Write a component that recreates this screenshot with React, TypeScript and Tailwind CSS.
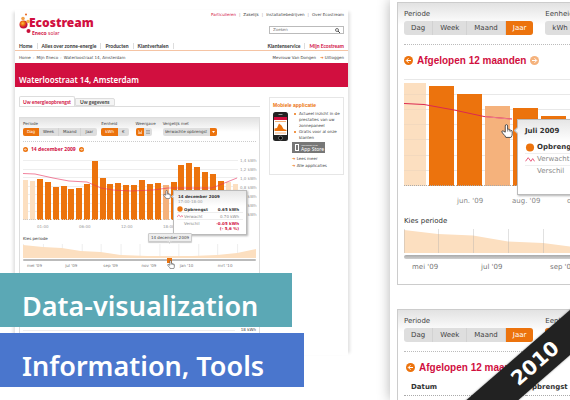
import React from "react";

const noto = "font-['Noto_Sans',sans-serif]";
const dejavu = "font-['DejaVu_Sans',sans-serif]";
const arial = "font-['Liberation_Sans',Arial,sans-serif]";

function Hand({ className }: { className: string }) {
  return (
    <svg viewBox="0 0 20 24" className={className} aria-hidden="true">
      <path
        d="M7 14V3.500Q7 1 9 1T11 3.500V9Q13.500 8 14 10Q16 9 16.500 11.200Q19 10.500 19 13V17Q19 20 17 23H8Q7 20 3.500 17L1 13.500Q1 11 3.500 12Z"
        fill="#fff"
        stroke="#444"
        strokeWidth="1.6"
        strokeLinejoin="round"
      />
      <path d="M11 9v4M14 10v3M16.500 11.500v2.500" stroke="#444" strokeWidth="1" />
    </svg>
  );
}

function CircleArrow({ back, pale, className }: { back?: boolean; pale?: boolean; className: string }) {
  return (
    <svg viewBox="0 0 18 18" className={className} aria-hidden="true">
      <circle cx="9" cy="9" r="9" fill={pale ? "#f5b27c" : "#ec730d"} />
      <path
        d={back ? "M14 9H5M9 4.500L4.500 9L9 13.500" : "M4 9H13M9 4.500L13.500 9L9 13.500"}
        fill="none"
        stroke="#fff"
        strokeWidth="2"
      />
    </svg>
  );
}

function Logo() {
  return (
    <div className={`flex ${noto} text-[#d10f3f]`}>
      <svg viewBox="0 0 12 22" className="h-[22px] w-3 shrink-0" aria-hidden="true">
        <defs>
          <radialGradient id="orb" cx="40%" cy="35%">
            <stop offset="0" stopColor="#fbc04d" />
            <stop offset="0.500" stopColor="#ec730d" />
            <stop offset="1" stopColor="#c8103a" />
          </radialGradient>
        </defs>
        <circle cx="7" cy="2.500" r="1" fill="#e9641c" />
        <circle cx="4" cy="6.500" r="1.800" fill="#f2a04a" />
        <circle cx="4.500" cy="12.500" r="4" fill="url(#orb)" />
        <circle cx="9" cy="9.500" r="1.800" fill="#f6b24a" />
        <circle cx="9.500" cy="19" r="2" fill="#c8103a" />
      </svg>
      <div className="-ml-0.5 pt-[3px]">
        <div className="text-[12px] font-black leading-[15px]">Ecostream</div>
        <div className="pl-[3px] text-[5px] leading-[6px]">
          <b>Eneco</b> solar
        </div>
      </div>
    </div>
  );
}

function Segments({ items, active, small }: { items: string[]; active: string | null; small?: boolean }) {
  return (
    <div className={small ? "flex h-2 overflow-hidden rounded-[2px] bg-[#dedede]" : "flex h-3.5 overflow-hidden rounded-[3px] bg-[#dedede]"}>
      {items.map((item) => (
        <button
          key={item}
          type="button"
          aria-pressed={item === active}
          className={`${small ? "px-1 text-[4px] leading-[8px]" : "px-[7px] text-[7px] leading-[14px]"} ${
            item === active ? "bg-[#ec730d] text-white" : "border-r border-[#d2d2d2] text-[#444] last:border-r-0"
          }`}
        >
          {item}
        </button>
      ))}
    </div>
  );
}

function Tooltip({ small, title, time, values }: { small?: boolean; title: string; time?: string; values: string[] }) {
  const row = small ? "flex h-[7px] items-center border-b border-[#eee]" : "flex h-3 items-center border-b border-[#eee]";
  const icon = small ? "mr-px h-1.5 w-1.5 shrink-0" : "mr-0.5 h-[9px] w-[10px] shrink-0";
  return (
    <div
      className={`relative border border-[#bbb] bg-white shadow-[1px_1px_2px_rgba(0,0,0,0.3)] ${dejavu} ${
        small ? "h-[45px] w-[74px] text-[4px] leading-[5px]" : "h-[76px] w-[140px] text-[7px] leading-[9px]"
      }`}
    >
      <span
        className={`absolute rotate-45 border-b border-l border-[#bbb] bg-[#f4f4f4] ${
          small ? "-left-[2px] top-1 h-[3px] w-[3px]" : "-left-[3px] top-2 h-[5px] w-[5px]"
        }`}
      />
      <div className={`bg-linear-to-b from-[#e6e6e6] to-white text-[#333] ${small ? "h-[15px] px-1 pt-[3px]" : "h-[22px] px-[7px] pt-[7px]"}`}>
        <b>{title}</b>
        {time && <div className="text-[#999]">{time}</div>}
      </div>
      <div className={small ? "px-[3px]" : "px-[7px]"}>
        <div className={`${row} text-[#333]`}>
          <svg viewBox="0 0 10 10" className={icon} aria-hidden="true">
            <circle cx="5" cy="5" r="4.500" fill="#ec730d" />
          </svg>
          <b>Opbrengst</b>
          <b className="ml-auto pr-1">{values[0]}</b>
        </div>
        <div className={`${row} text-[#888]`}>
          <svg viewBox="0 0 10 10" className={icon} aria-hidden="true">
            <path d="M0 7L3 3L6 7L8 4L10 7" fill="none" stroke="#e54a6e" />
          </svg>
          <span>Verwacht</span>
          <span className="ml-auto pr-1">{values[1]}</span>
        </div>
        <div className="flex pt-px text-[#888]">
          <span className={icon} />
          <span>Verschil</span>
          <b className="ml-auto pr-1 text-right text-[#d10f3f]">
            {values[2]}
            <br />
            {values[3]}
          </b>
        </div>
      </div>
    </div>
  );
}

const dayBars: [number, number, string][] = [
  [0, 40, "l"], [7, 39, "l"], [14, 41, "d"], [22, 38, "d"], [30, 33, "d"], [38, 34, "d"], [45, 31, "d"], [53, 32, "d"],
  [61, 36, "d"], [69, 59, "d"], [77, 42, "d"], [84, 36, "d"], [92, 37, "d"], [100, 35, "d"], [108, 35, "d"], [116, 40, "d"],
  [124, 36, "d"], [132, 37, "d"], [140, 35, "m"], [148, 38, "d"], [155, 55, "d"], [163, 57, "d"], [171, 53, "d"],
  [179, 48, "d"], [187, 46, "d"], [195, 39, "d"], [203, 38, "l"], [210, 36, "l"],
];
const yearBars: [number, number, string][] = [
  [0, 103, "l"], [25, 100, "d"], [53, 92, "d"], [81, 80, "m"], [109, 78, "d"], [137, 70, "d"], [165, 64, "d"],
];
const fills: Record<string, string> = { l: "#fcdfc0", m: "#f5b27c", d: "#ec730d" };

function DayChart() {
  return (
    <div className="relative flex text-[4px] leading-[6px] text-[#999]">
      <div>
        <svg viewBox="0 0 215 64" className="h-16 w-[215px]" role="img" aria-label="Opbrengst per uur">
          {[4, 13, 21, 30, 38, 47, 55].map((y) => (
            <path key={y} d={`M0 ${y}.5H215`} stroke="#eee" />
          ))}
          {dayBars.map(([x, h, t]) => (
            <rect key={x} x={x} y={64 - h} width={t === "l" ? 5 : 6} height={h} fill={fills[t]} />
          ))}
          <path d="M0 63.500H215" stroke="#ccc" strokeDasharray="1 1" />
          <path d="M0 17.500L12 18L30 22L46 25L64 26L78 32L90 34L108 35L130 34L145 32H189L214 22" fill="none" stroke="#e8305d" strokeOpacity="0.600" />
        </svg>
        <div className="flex h-4 pl-3.5 pt-1">
          {["01:00", "06:00", "12:00", "18:00"].map((t) => (
            <span key={t} className="w-[42px]">{t}</span>
          ))}
        </div>
      </div>
      <div className="flex flex-col gap-[3px] pl-0.5 pt-[2px]">
        {["1,4 kWh", "1,2 kWh", "1,0 kWh", "0,8 kWh", "0,6 kWh", "0,4 kWh", "0,2 kWh"].map((v) => (
          <span key={v} className="whitespace-nowrap">{v}</span>
        ))}
      </div>
      <div className="absolute left-[150px] top-[34px]">
        <Tooltip small title="14 december 2009" time="17:00-18:00" values={["0.65 kWh", "0.70 kWh", "-0.05 kWh", "(- 5,6 %)"]} />
      </div>
      <Hand className="absolute left-[140px] top-[34px] h-[9px] w-2" />
    </div>
  );
}

const links = ["Particulieren", "Zakelijk", "Installatiebedrijven", "Over Ecostream"];
const benefits = ["Actueel inzicht in de prestaties van uw zonnepaneel", "Gratis voor al onze klanten"];

function Website() {
  return (
    <article className={`mb-[45px] ml-[15px] mt-2.5 w-[333px] shrink-0 overflow-hidden bg-white text-[4px] leading-[6px] text-[#444] shadow-[-4px_0_3px_-2px_rgba(0,0,0,0.12),4px_0_3px_-2px_rgba(0,0,0,0.12)] ${dejavu}`}>
      <header>
        <div className="flex h-[31px] justify-between px-1 pt-0.5">
          <Logo />
          <div className="flex flex-col items-end gap-2">
            <nav className="flex">
              {links.map((l, i) => (
                <React.Fragment key={l}>
                  {i > 0 && <span className="px-[3px] text-[#999]">|</span>}
                  <a href="#" className={i === 0 ? "text-[#d10f3f]" : ""}>{l}</a>
                </React.Fragment>
              ))}
            </nav>
            <div className="flex h-2 w-[75px] items-center border border-[#bbb] px-[3px]">
              <input aria-label="Zoeken" placeholder="Zoeken" className="h-1.5 min-w-0 flex-1 placeholder:text-[#777]" />
              <svg viewBox="0 0 10 10" className="h-[5px] w-[5px]" aria-hidden="true">
                <circle cx="4" cy="4" r="3" fill="none" stroke="#444" strokeWidth="1.500" />
                <path d="M6 6L10 10" stroke="#444" strokeWidth="2" />
              </svg>
            </div>
          </div>
        </div>
        <nav className="flex h-2.5 items-center border-b border-[#f5c4a4] px-1 font-['Lato',sans-serif] text-[5px] font-bold text-[#333]">
          <a href="#" className="border-r border-[#ddd] pr-1">Home</a>
          <a href="#" className="border-r border-[#ddd] px-1">Alles over zonne-energie</a>
          <a href="#" className="border-r border-[#ddd] px-1">Producten</a>
          <a href="#" className="border-r border-[#ddd] px-1">Klantverhalen</a>
          <a href="#" className="ml-auto border-r border-[#ddd] pr-1">Klantenservice</a>
          <a href="#" className="pl-1 text-[#d10f3f]">Mijn Ecostream</a>
        </nav>
        <div className="flex h-3 items-center gap-0.5 px-1 pt-0.5">
          <a href="#">Home</a><span className="text-[#bbb]">›</span>
          <a href="#">Mijn Eneco</a><span className="text-[#bbb]">›</span>
          <span>Waterloostraat 14, Amsterdam</span>
          <span className="ml-auto pr-0.5">Mevrouw Van Dongen</span>
          <a href="#"><span className="text-[#ec730d]">➔</span> Uitloggen</a>
        </div>
      </header>
      <div className="h-6 bg-[#d10f3f] px-1 pt-3">
        <h1 className={`text-[8px] font-semibold leading-[10px] text-white ${noto}`}>Waterloostraat 14, Amsterdam</h1>
      </div>
      <div className="flex gap-[9px] px-1 pt-2.5">
        <main className="min-w-0 flex-1">
          <div className="flex h-2.5 items-end border-b border-[#ddd] font-['Lato',sans-serif]">
            <button type="button" className="h-2.5 rounded-t-[2px] border border-b-0 border-[#ddd] bg-white px-[3px] text-[5px] font-bold text-[#d10f3f]">Uw energieopbrengst</button>
            <button type="button" className="h-2 rounded-tr-[2px] border border-[#ddd] bg-[#f4f4f4] px-1 text-[5px] font-bold">Uw gegevens</button>
          </div>
          <section className="mt-2.5 border border-[#ddd] bg-linear-to-b from-[#e2e2e2] to-transparent to-[14px] px-[3px]">
            <div className="flex h-6 items-start border-b border-dotted border-[#ccc] pt-0.5">
              <div role="group" aria-label="Periode" className="mr-1">
                <div className="mb-px h-[7px] leading-[7px]">Periode</div>
                <Segments small items={["Dag", "Week", "Maand", "Jaar"]} active="Dag" />
              </div>
              <div role="group" aria-label="Eenheid" className="mr-[7px]">
                <div className="mb-px h-[7px] leading-[7px]">Eenheid</div>
                <Segments small items={["kWh", "€"]} active="kWh" />
              </div>
              <div role="group" aria-label="Weergave" className="mr-[7px]">
                <div className="mb-px h-[7px] leading-[7px]">Weergave</div>
                <div className="flex h-2 w-4 overflow-hidden rounded-[2px] bg-[#dedede]">
                  <button type="button" aria-label="Grafiek" className="flex w-2 items-center justify-center bg-[#ec730d]">
                    <svg viewBox="0 0 8 8" className="h-1 w-1"><path d="M0.500 0V7.500H8M3 7V3M5 7V4M7 7V1" fill="none" stroke="#fff" /></svg>
                  </button>
                  <button type="button" aria-label="Tabel" className="flex w-2 items-center justify-center">
                    <svg viewBox="0 0 8 8" className="h-1 w-1"><path d="M0 1H8M0 4H8M0 7H8" stroke="#777" /></svg>
                  </button>
                </div>
              </div>
              <div>
                <label htmlFor="compare" className="mb-px block h-[7px] leading-[7px]">Vergelijk met</label>
                <div className="flex h-2 overflow-hidden rounded-[2px] bg-[#dedede]">
                  <select id="compare" className="w-[47px] appearance-none pl-0.5 text-[4px] leading-[8px]">
                    <option>Verwachte opbrengst</option>
                  </select>
                  <svg viewBox="0 0 7 8" className="h-2 w-[7px] bg-[#ec730d]" aria-hidden="true"><path d="M2 3H5L3.500 5Z" fill="#fff" /></svg>
                </div>
              </div>
            </div>
            <div className="flex h-3.5 items-center gap-[3px]">
              <CircleArrow back className="h-[5px] w-[5px]" />
              <h2 className={`text-[5px] font-bold text-[#d10f3f] ${noto}`}>14 december 2009</h2>
              <CircleArrow className="h-[5px] w-[5px]" />
            </div>
            <DayChart />
            <div className="relative">
              <h3 className="h-2 text-[#333]">Kies periode</h3>
              <div className="absolute left-[125px] top-[-3px] rounded-[1px] border border-[#ccc] bg-[#eee] px-0.5 leading-[7px] shadow-[0_1px_1px_rgba(0,0,0,0.2)]">
                14 december 2009
                <span className="absolute -bottom-[2px] left-[19px] h-[3px] w-[3px] rotate-45 border-b border-r border-[#ccc] bg-[#eee]" />
              </div>
              <svg viewBox="0 0 234 14" preserveAspectRatio="none" className="h-3.5 w-full" aria-hidden="true">
                {[0, 20, 39, 59, 78, 98, 117, 137, 156, 176, 195, 215].map((x) => (
                  <path key={x} d={`M${x}.5 0V14`} stroke="#eee" />
                ))}
                <path d="M0 1L20 3L39 4L58 7L78 8L98 11L125 12H170L195 11L215 9L234 5V14H0Z" fill="#fcdfc0" />
              </svg>
              <input type="range" aria-label="Kies periode" defaultValue={63} className="mt-px block h-0.5 w-full appearance-none rounded-full bg-[#bbb] [&::-webkit-slider-thumb]:h-[5px] [&::-webkit-slider-thumb]:w-[5px] [&::-webkit-slider-thumb]:appearance-none [&::-webkit-slider-thumb]:bg-[#ec730d]" />
              <Hand className="absolute left-36 top-6 h-[9px] w-2" />
              <div className="flex h-10 pl-1 pt-0.5 text-[#777]">
                {["mei '09", "jul '09", "sep '09", "nov '09", "jan '10", "mrt '10"].map((m) => (
                  <span key={m} className="w-[39px]">{m}</span>
                ))}
              </div>
            </div>
            <div className="flex h-[60px] items-start gap-1.5 pt-[26px]">
              <span className="mt-[3px] flex-1 border-t border-[#eee]" />
              <span>18 kWh</span>
            </div>
          </section>
        </main>
        <aside className="h-[78px] w-[75px] shrink-0 border border-[#e6e6e6] px-[3px] pt-1">
          <h2 className={`text-[5px] font-bold leading-[6px] text-[#ec730d] ${arial}`}>Mobiele applicatie</h2>
          <div className="flex gap-1 pt-[3px]">
            <svg viewBox="0 0 30 58" className="mt-px h-[29px] w-[15px] shrink-0" aria-hidden="true">
              <rect width="30" height="58" rx="5" fill="#222" />
              <rect x="2" y="10" width="26" height="36" fill="#fff" />
              <rect x="2" y="10" width="26" height="6" fill="#d10f3f" />
              <path d="M3 38V33L8 32L12 23L17 27L21 34L27 36V38Z" fill="#ec730d" />
              <path d="M4 19H26M4 42H26" stroke="#f5b27c" strokeWidth="2" />
              <path d="M11 5H19" stroke="#999" strokeWidth="2" />
              <circle cx="15" cy="52" r="4" fill="#000" stroke="#bbb" />
            </svg>
            <div className="leading-[6px]">
              <ul className="pl-0.5">
                {benefits.map((b) => (
                  <li key={b} className="flex gap-[3px]">
                    <span className="mt-0.5 h-0.5 w-0.5 shrink-0 rounded-full bg-[#ec730d]" />
                    <span>{b}</span>
                  </li>
                ))}
              </ul>
              <button type="button" className="mt-px flex h-[11px] w-[33px] items-center gap-0.5 bg-[#777] pl-[3px] text-left text-white">
                <svg viewBox="0 0 4 7" className="h-[7px] w-1 shrink-0" aria-hidden="true"><rect x="0.500" y="0.500" width="3" height="6" fill="none" stroke="#fff" /></svg>
                <span className={`leading-[5px] ${noto}`}>
                  <span className="block whitespace-nowrap text-[2px] leading-[3px]">Verkrijgbaar in de</span>
                  <span className="block whitespace-nowrap text-[5px]">App Store</span>
                </span>
              </button>
              <a href="#" className="mt-[3px] block"><span className="text-[#ec730d]">➔</span> Lees meer</a>
              <a href="#" className="mt-px block whitespace-nowrap"><span className="text-[#ec730d]">➔</span> Alle applicaties</a>
            </div>
          </div>
        </aside>
      </div>
    </article>
  );
}

function Filters({ unit }: { unit: string | null }) {
  return (
    <div className="flex h-[42px] gap-3 border-b border-dotted border-[#bbb] pt-1.5 text-[7px] leading-[10px] text-[#444]">
      <div role="group" aria-label="Periode">
        <div className="mb-0.5">Periode</div>
        <Segments items={["Dag", "Week", "Maand", "Jaar"]} active="Jaar" />
      </div>
      <div role="group" aria-label="Eenheid">
        <div className="mb-0.5">Eenheid</div>
        <Segments items={["kWh", "€"]} active={unit} />
      </div>
    </div>
  );
}

function PeriodTitle() {
  return (
    <div className="flex h-[30px] items-center gap-1">
      <CircleArrow back className="h-[9px] w-[9px] shrink-0" />
      <h2 className={`whitespace-nowrap text-[10px] font-bold text-[#d10f3f] ${arial}`}>Afgelopen 12 maanden</h2>
      <CircleArrow pale className="h-[9px] w-[9px] shrink-0" />
    </div>
  );
}

const card = "w-[360px] border border-[#ccc] bg-linear-to-b from-[#e2e2e2] to-transparent to-[22px] px-1.5";

function Detail() {
  return (
    <section className={`ml-[42px] min-w-0 flex-1 overflow-hidden bg-white pl-[7px] pt-0.5 shadow-[0_0_12px_rgba(0,0,0,0.3)] ${dejavu}`}>
      <div className={`${card} h-[283px]`}>
        <Filters unit={null} />
        <PeriodTitle />
        <div className="relative">
          <svg viewBox="0 0 300 112" className="h-28 w-[300px]" role="img" aria-label="Opbrengst per maand">
            {[4, 19, 34, 49, 64, 80, 95].map((y) => (
              <path key={y} d={`M0 ${y}.5H300`} stroke="#e8e8e8" />
            ))}
            {yearBars.map(([x, h, t]) => (
              <rect key={x} x={x} y={111 - h} width={t === "l" ? 22 : 25} height={h} fill={fills[t]} />
            ))}
            <path d="M0 19.500H22M0 34.500H22M0 49.500H22M0 64.500H22M0 80.500H22M0 95.500H22" stroke="#f3d9be" />
            <path d="M0 110.500H300" stroke="#aaa" strokeDasharray="1 1" />
            <path d="M0 28.500L20 29.500L50 35L80 41.500L108 44" fill="none" stroke="#dc2850" />
            <path d="M81 41.700L106 44" stroke="#ef7f8d" />
          </svg>
          <div className="flex h-[27px] pl-[53px] pt-[9px] text-[7px] leading-[10px] text-[#888]">
            {["jun. '09", "aug. '09", "okt. '09"].map((m) => (
              <span key={m} className="w-[55px]">{m}</span>
            ))}
          </div>
          <div className="absolute left-[113px] top-11">
            <Tooltip title="Juli 2009" values={["", "", "", ""]} />
          </div>
          <Hand className="absolute left-[97px] top-[49px] h-[14px] w-3" />
        </div>
        <h3 className="h-[15px] pt-0.5 text-[7px] leading-[10px] text-[#333]">Kies periode</h3>
        <svg viewBox="0 0 346 24" className="h-6 w-[346px]" aria-hidden="true">
          <path d="M0 1L34 5L69 6.500L104 12.500L139 14L170 18L346 20V24H0Z" fill="#fcdfc0" />
          {[0, 34, 69, 104, 139, 173].map((x) => (
            <path key={x} d={`M${x}.5 0V24`} stroke="#aaa" strokeOpacity="0.350" />
          ))}
        </svg>
        <input type="range" aria-label="Kies periode" defaultValue={80} className="mt-0.5 block h-1 w-full appearance-none rounded-full bg-linear-to-b from-[#aaa] to-[#d0d0d0] [&::-webkit-slider-thumb]:h-2 [&::-webkit-slider-thumb]:w-2 [&::-webkit-slider-thumb]:appearance-none [&::-webkit-slider-thumb]:bg-[#ec730d]" />
        <div className="flex pl-2 pt-[3px] text-[7px] leading-[10px] text-[#777]">
          {["mei '09", "jul '09", "sep '09", "nov '09"].map((m) => (
            <span key={m} className="w-[69px]">{m}</span>
          ))}
        </div>
      </div>
      <div className={`${card} mt-6 pb-10`}>
        <Filters unit="kWh" />
        <div className="pl-0.5">
          <PeriodTitle />
        </div>
        <table className="w-full text-[7px] leading-[10px] text-[#333]">
          <thead>
            <tr className="border-b border-dotted border-[#aaa]">
              <th className="w-[122px] pb-[3px] pl-[7px] text-left">Datum</th>
              <th className="pb-[3px] text-left">Opbrengst</th>
            </tr>
          </thead>
        </table>
      </div>
    </section>
  );
}

export default function App() {
  return (
    <div className="relative flex h-screen overflow-hidden bg-white">
      <Website />
      <Detail />
      <div className={`absolute bottom-[13px] left-0 flex flex-col items-start gap-1.5 text-[27px] font-semibold leading-[54px] text-white ${noto}`}>
        <div className="h-[54px] bg-[#5ba8b5] pl-[22px] pr-[34px] pt-1.5">Data-visualization</div>
        <div className="h-[54px] bg-[#4a76cd] pl-[22px] pr-10 pt-1.5">Information, Tools</div>
      </div>
      <div className={`absolute -right-[65px] bottom-5 flex h-[34px] w-[200px] -rotate-[41deg] items-center justify-center bg-[#222] text-[20px] font-bold text-white shadow-[0_0_2px_rgba(0,0,0,0.5)] ${dejavu}`}>
        2010
      </div>
    </div>
  );
}
